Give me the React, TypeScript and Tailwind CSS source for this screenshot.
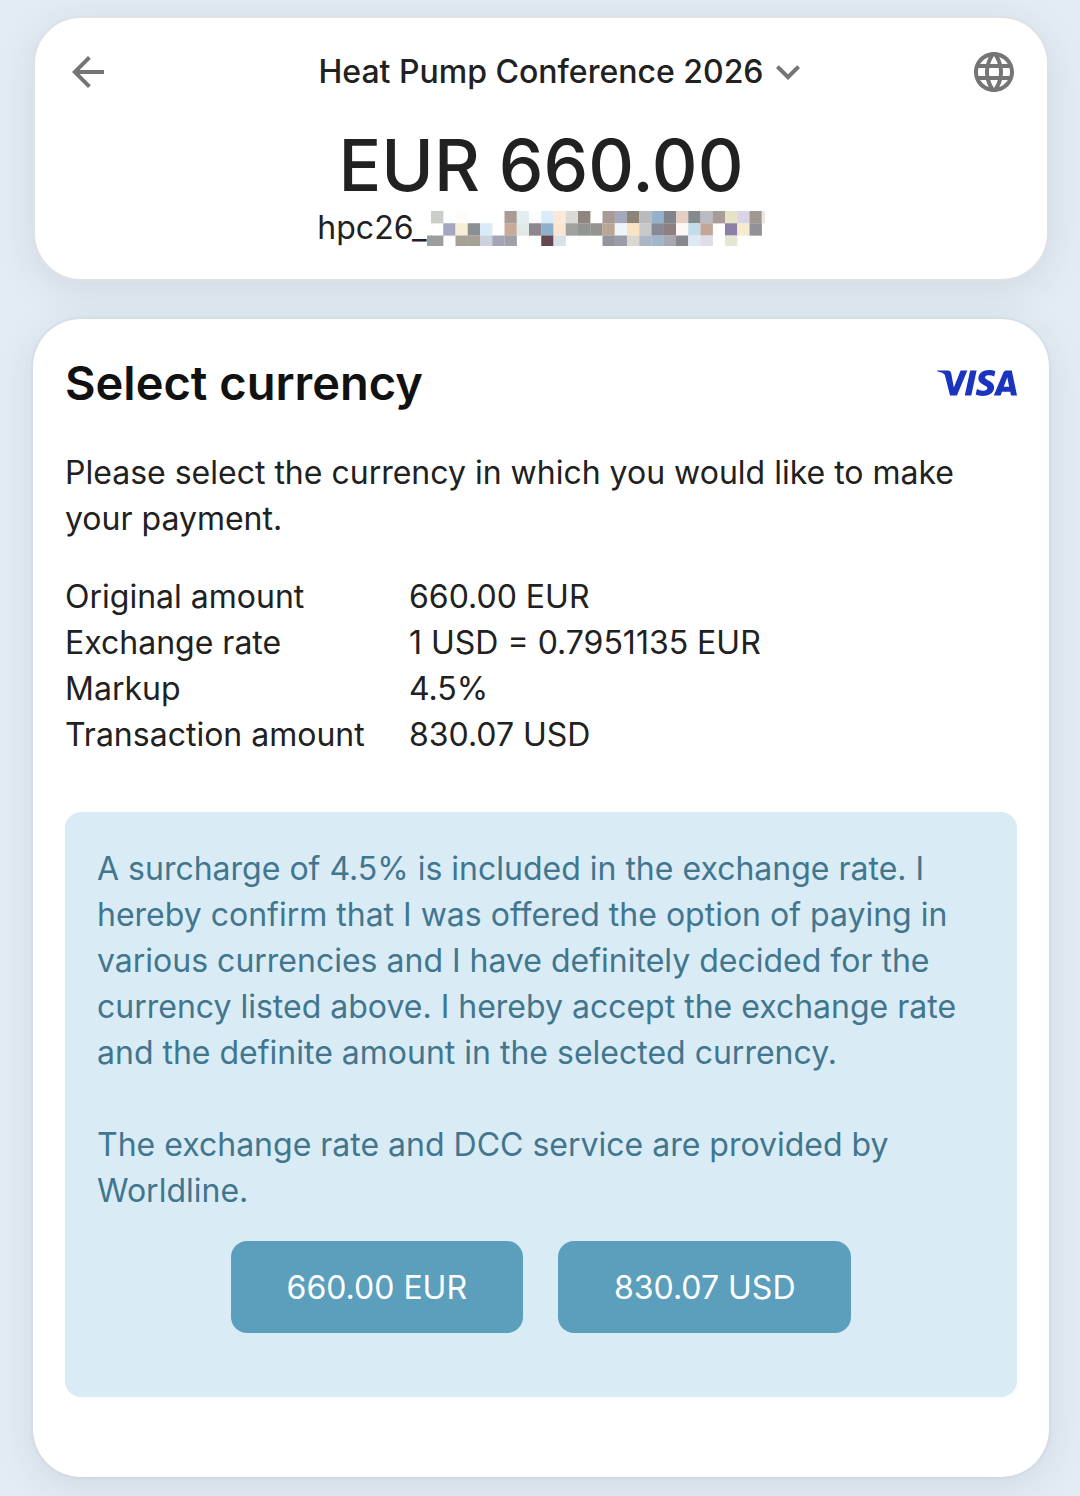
import React, { useState } from "react";
import { MdArrowBack, MdExpandMore, MdLanguage } from "react-icons/md";
import { SiVisa } from "react-icons/si";

const details = [
  { label: "Original amount", value: "660.00 EUR" },
  { label: "Exchange rate", value: "1 USD = 0.7951135 EUR" },
  { label: "Markup", value: "4.5%" },
  { label: "Transaction amount", value: "830.07 USD" },
];

const currencies = ["660.00 EUR", "830.07 USD"];

// block colours that hide the end of the order number, "-" is an empty block
const mosaic = [
  "c9cec9 - fefcf8 - - - a99b93 e2edf2 fdfdfd d9ebf8 fae9d8 d9dcd6 91857f - a89a94 a4aabb 8c8577 b9babc 94b0cb 80848c e4cfc2 858a8c bbbcc2 a89c98 e5e3c4 dad5e6 a2978f",
  "- a5a6c0 f6eed6 8a8f92 d9ebf8 - c7ab98 dfe9e8 8d8590 8eb0cb f8e6d2 a0a09c 929692 939490 bba696 eef5fa fae5c0 c6c8ca 858a96 8d807e fcf8f6 c2dcec c4a696 - 8d7fa8 f5ecd0 919296",
  "9c9e9c - a7a096 a7a096 ccd2dc a3a5b6 a0a0a8 - - 65484f d8e1e6 - - - 94959c 9a9caa dcd6d0 aab6c6 a2b6ca a8a8b2 86888e dde9f4 dcdfe8 - e6e6d2 - -",
];

const Mosaic = () => {
  return (
    <svg width="338" height="35" viewBox="0 0 338 35" aria-hidden="true">
      <rect x="0" y="24.5" width="5" height="10.5" fill="#9c9e9c" />
      {mosaic.map((row, y) =>
        row.split(" ").map((color, x) => {
          if (color === "-") return null;
          return (
            <rect
              key={`${x}-${y}`}
              x={4 + x * 12.25}
              y={y * 12.25}
              width="12.4"
              height={y === 2 ? 10.5 : 12.4}
              fill={`#${color}`}
            />
          );
        })
      )}
      <rect x="334.7" y="0" width="3.3" height="12.4" fill="#ede6e0" />
    </svg>
  );
};

const App = () => {
  const [selected, setSelected] = useState("");

  return (
    <div className="min-h-screen bg-[#e3ecf4] pt-4 pr-[31px] pb-5 pl-[33px] font-['Inter',sans-serif] text-[32px] leading-[46px] text-[#212121]">
      <header className="rounded-[48px] border-2 border-[#dfe1e4] bg-white px-[29px] pt-[30px] pb-7 shadow-[0_8px_40px_rgba(40,50,70,0.1)]">
        <div className="flex items-center justify-between text-[#757575]">
          <button type="button" aria-label="Back">
            <MdArrowBack size={48} />
          </button>
          <button type="button" className="flex items-center pl-12">
            <span className="font-medium text-[#212121]">
              Heat Pump Conference 2026
            </span>
            <MdExpandMore size={48} />
          </button>
          <button type="button" aria-label="Language">
            <MdLanguage size={48} />
          </button>
        </div>
        <div className="mt-[29px] text-center text-[71px] leading-[80px] font-medium">
          EUR 660.00
        </div>
        <div className="flex items-center justify-center">
          <span>hpc26_</span>
          <Mosaic />
        </div>
      </header>

      <main className="mt-[38px] rounded-[48px] bg-white px-8 pt-8 pb-20 shadow-[0_0_2px_2px_rgba(0,0,0,0.03),0_8px_40px_rgba(40,50,70,0.1)]">
        <div className="flex items-center justify-between">
          <h1 className="text-[47px] leading-[64px] font-semibold text-[#111111]">
            Select currency
          </h1>
          <SiVisa
            viewBox="0 8 24 8"
            className="h-7 w-20 text-[#1a34c0]"
            title="Visa"
          />
        </div>
        <p className="mt-[35px]">
          Please select the currency in which you would like to make your
          payment.
        </p>
        <table className="mt-8 text-left">
          <tbody>
            {details.map((d) => {
              return (
                <tr key={d.label}>
                  <th scope="row" className="w-[344px] p-0 font-normal">
                    {d.label}
                  </th>
                  <td className="p-0">{d.value}</td>
                </tr>
              );
            })}
          </tbody>
        </table>
        <section className="mt-[54px] rounded-2xl bg-[#d9ecf5] px-8 pt-[34px] pb-16 text-[#42758e]">
          <p>
            A surcharge of 4.5% is included in the exchange rate. I hereby
            confirm that I was offered the option of paying in various
            currencies and I have definitely decided for the currency listed
            above. I hereby accept the exchange rate and the definite amount in
            the selected currency.
          </p>
          <p className="mt-[46px]">
            The exchange rate and DCC service are provided by Worldline.
          </p>
          <div className="mt-[27px] flex justify-center gap-[35px]">
            {currencies.map((c) => {
              return (
                <button
                  key={c}
                  type="button"
                  aria-pressed={selected === c}
                  onClick={() => setSelected(c)}
                  className="rounded-2xl bg-[#5b9fbd] px-14 pt-6 pb-[22px] text-white"
                >
                  {c}
                </button>
              );
            })}
          </div>
        </section>
      </main>
    </div>
  );
};

export default App;
